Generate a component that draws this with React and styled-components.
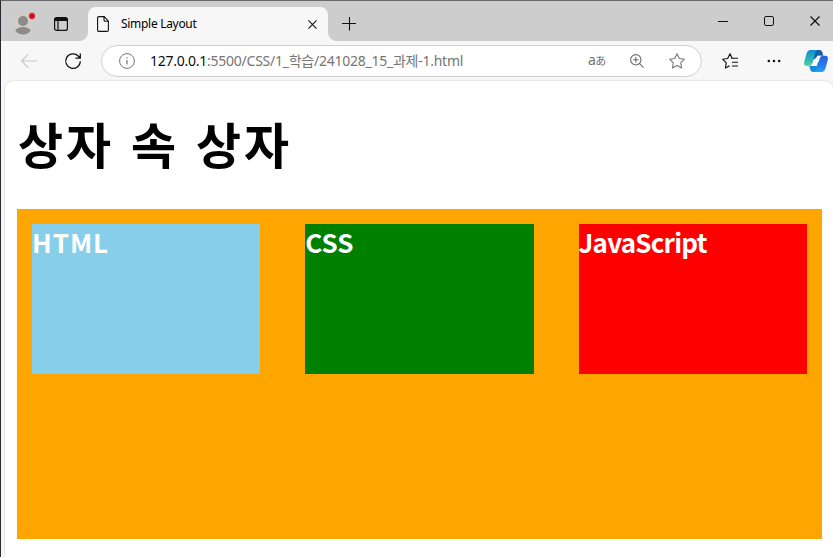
import React from "react";
import styled, { createGlobalStyle } from "styled-components";

const Global = createGlobalStyle`
  * { box-sizing: border-box; }
  html, body { margin: 0; background: #fff; overflow: hidden; }
  body { font-family: "Noto Sans", "Noto Sans CJK KR", sans-serif; color: #000; }
  h1, h2 { margin: 0; }
  svg { display: block; flex: none; overflow: visible; }
`;

const Window = styled.div`
  width: 833px;
  height: 557px;
  display: flex;
  flex-direction: column;
  background: #f7f7f7;
  border-top: 1px solid #69676b;
  border-left: 1px solid #2b2936;
  overflow: hidden;
`;

const TitleBar = styled.header`
  display: flex;
  height: 40px;
  flex: none;
  background: #cdcdcd;
`;

const Glyph = styled.span`
  display: flex;
  flex: none;
  width: ${(p) => p.$w}px;
  height: ${(p) => p.$h || p.$w}px;
  margin-left: ${(p) => p.$gap || 0}px;
  margin-top: ${(p) => p.$top || 0}px;
`;

const Tab = styled.div`
  position: relative;
  display: flex;
  width: 240px;
  height: 34px;
  margin: 6px 0 0 20px;
  background: #f7f7f7;
  border-radius: 8px 8px 0 0;

  &::before,
  &::after {
    content: "";
    position: absolute;
    bottom: 0;
    width: 8px;
    height: 8px;
  }
  &::before {
    left: -8px;
    background: radial-gradient(circle at 0 0, #cdcdcd 7.5px, #f7f7f7 8px);
  }
  &::after {
    right: -8px;
    background: radial-gradient(circle at 100% 0, #cdcdcd 7.5px, #f7f7f7 8px);
  }
`;

const TabTitle = styled.span`
  width: 186px;
  margin-left: 12px;
  font-size: 12px;
  line-height: 34px;
  letter-spacing: -0.3px;
  white-space: nowrap;
`;

const Toolbar = styled.nav`
  display: flex;
  height: 40px;
  flex: none;
`;

const AddressBar = styled.div`
  display: flex;
  width: 601px;
  height: 32px;
  margin: 4px 0 0 20px;
  background: #fff;
  border: 1px solid #cfcfcf;
  border-radius: 16px;
`;

const Url = styled.div`
  width: 438px;
  margin-left: 15px;
  font-size: 14px;
  line-height: 30px;
  color: #757575;
  white-space: nowrap;
  letter-spacing: -0.25px;
`;

const Host = styled.span`
  color: #111;
`;

const Translate = styled.span`
  width: 19px;
  font-size: 14px;
  line-height: 28px;
  color: #707070;
  white-space: nowrap;

  small { font-family: "Noto Sans CJK JP", sans-serif; font-size: 11px; margin-left: -0.5px; }
`;

const Page = styled.main`
  flex: 1;
  margin-left: 4px;
  padding: 30px 11px 0 12px;
  background: #fff;
  border-radius: 8px 8px 0 0;
  box-shadow: 0 0 2px rgba(0, 0, 0, 0.22);
`;

const Heading = styled.h1`
  height: 98px;
  font-family: "Noto Sans CJK KR", sans-serif;
  font-size: 49px;
  line-height: 64px;
  font-weight: 700;
  letter-spacing: 2.9px;
  word-spacing: 3px;
  padding-left: 1px;
  white-space: nowrap;
`;

const Outer = styled.section`
  display: flex;
  justify-content: space-between;
  height: 330px;
  padding: 15px;
  background: #ffa500;
`;

const Card = styled.article`
  width: 228.4px;
  height: 150px;
  background: ${(p) => p.$color};
`;

const CardTitle = styled.h2`
  font-family: "Noto Sans CJK KR", sans-serif;
  font-size: 26px;
  line-height: 36px;
  font-weight: 700;
  color: #fff;
  letter-spacing: ${(p) => p.$track}px;
`;

const cards = [
  { title: "HTML", color: "#87ceeb", track: 1 },
  { title: "CSS", color: "#008000", track: 0 },
  { title: "JavaScript", color: "#ff0000", track: -0.8 },
];

const STAR = "M8 .8 10.3 5.5 15.4 6.2 11.7 9.8 12.6 15 8 12.5 3.4 15 4.3 9.8 .6 6.2 5.7 5.5Z";

const Avatar = () => (
  <svg width="24" height="24" viewBox="0 0 24 24">
    <circle cx="11" cy="12" r="10.5" fill="#d1cec9" />
    <circle cx="11" cy="9" r="5" fill="#8d8b88" />
    <path d="M3.2 18.5Q5.5 15 11 15t7.8 3.5Q16 22.6 11 22.6t-7.8-4.1Z" fill="#8d8b88" />
    <circle cx="20" cy="4" r="3.4" fill="#d50b17" stroke="#dedede" strokeWidth=".6" />
  </svg>
);

const Workspaces = () => (
  <svg width="14" height="14" viewBox="0 0 14 14" fill="none" stroke="#111">
    <rect x=".6" y=".6" width="12.8" height="12.8" rx="2" strokeWidth="1.2" />
    <path d="M.8 2.5h12.4" strokeWidth="3" />
    <path d="M4 3v10" strokeWidth="1.2" />
  </svg>
);

const FileIcon = () => (
  <svg width="12" height="16" viewBox="0 0 12 16" fill="none" stroke="#111" strokeWidth="1.1">
    <path d="M2 .6h5.2l4.2 4.5V14q0 1.4-1.4 1.4H2Q.6 15.4.6 14V2Q.6.6 2 .6ZM7 .8V4q0 1.3 1.3 1.3h3" />
  </svg>
);

const Cross = ({ size }) => (
  <svg width={size} height={size} viewBox="0 0 10 10" stroke="#111" strokeWidth="1.2">
    <path d="m.5.5 9 9m0-9-9 9" />
  </svg>
);

const Plus = () => (
  <svg width="14" height="14" viewBox="0 0 14 14" stroke="#111" strokeWidth="1.1">
    <path d="M0 6.5h14M7.5 0v13.5" />
  </svg>
);

const Minimize = () => (
  <svg width="10" height="10" viewBox="0 0 10 10" stroke="#111">
    <path d="M0 4.5h10" />
  </svg>
);

const Maximize = () => (
  <svg width="10" height="10" viewBox="0 0 10 10" fill="none" stroke="#111">
    <rect x=".5" y=".5" width="9" height="9" rx="1.4" />
  </svg>
);

const Back = () => (
  <svg width="16" height="14" viewBox="0 0 16 14" fill="none" stroke="#c6c6c6" strokeWidth="1.1">
    <path d="M16 7H.8M7.2.4.6 7l6.6 6.6" />
  </svg>
);

const Refresh = () => (
  <svg width="16" height="16" viewBox="0 0 16 16" fill="none" stroke="#111" strokeWidth="1.25">
    <path d="M15.3 8.2A7.3 7.3 0 1 1 13.2 3L15 4.8M15.3.4v4.8h-4.8" />
  </svg>
);

const Info = () => (
  <svg width="16" height="16" viewBox="0 0 16 16" fill="none" stroke="#757575">
    <circle cx="8" cy="8" r="7.4" strokeWidth="1" />
    <path d="M8 7v4.5M8 4.2v1.4" strokeWidth="1.2" />
  </svg>
);

const Zoom = () => (
  <svg width="14" height="14" viewBox="0 0 14 14" fill="none" stroke="#6b6b6b" strokeWidth="1.1">
    <circle cx="5.8" cy="5.8" r="5.2" />
    <path d="m9.6 9.6 4 4M3.1 5.8h5.4M5.8 3.1v5.4" />
  </svg>
);

const Star = () => (
  <svg width="16" height="16" viewBox="0 0 16 16" fill="none" stroke="#757575" strokeWidth="1.05" strokeLinejoin="round">
    <path d={STAR} />
  </svg>
);

const Favorites = () => (
  <svg width="16" height="16" viewBox="0 0 16 16" fill="none" stroke="#111" strokeWidth="1.15" strokeLinejoin="round">
    <path d="M7.6 12.7 3.4 15 4.3 9.8.6 6.2 5.7 5.5 8 .8l2.1 4.4M9 5.2h7M10 9.2h6M10 13h6" />
  </svg>
);

const More = () => (
  <svg width="14" height="4" viewBox="0 0 14 4" fill="#111">
    <circle cx="1.8" cy="2" r="1.25" />
    <circle cx="7" cy="2" r="1.25" />
    <circle cx="12.2" cy="2" r="1.25" />
  </svg>
);

const Copilot = () => (
  <svg width="24" height="22" viewBox="0 0 24 22">
    <defs>
      <linearGradient id="left" x1="0" y1="0" x2="0" y2="1">
        <stop stopColor="#168acd" />
        <stop offset=".55" stopColor="#24b4b9" />
        <stop offset="1" stopColor="#62d394" />
      </linearGradient>
      <linearGradient id="right" x1="0" y1="0" x2="0" y2="1">
        <stop stopColor="#2b62d9" />
        <stop offset=".6" stopColor="#2979f0" />
        <stop offset="1" stopColor="#22a7ed" />
      </linearGradient>
    </defs>
    <path d="M7 0h8.5Q17.7 0 18.3 2.2l1 3.5H15q-2 0-2.7 2L9 10Z" fill="#145ea9" />
    <path d="M17 22H9.2Q7 22 6.4 20l-1.2-4H9q2 0 2.7-2l3.7-3Z" fill="#168bdc" />
    <path d="M6.5 0H14q-2 0-2.8 3L8.5 13q-.8 3-3.5 3H3q-3.7 0-2.8-4L2.4 4Q3.5 0 6.5 0Z" fill="url(#left)" />
    <path d="M17.5 22H10q2 0 2.8-3L15.5 9q.8-3.2 3.5-3.2h2q3.7 0 2.8 4L21.6 18q-1.1 4-4.1 4Z" fill="url(#right)" />
    <path d="M13.2 5.8h4L15.6 7l-2.8 9H8.3q1.5-.5 2-2.2Z" fill="#f7f9fb" />
  </svg>
);

export default function App() {
  return (
    <Window>
      <Global />
      <TitleBar>
        <Glyph $w={24} $gap={11} $top={11}><Avatar /></Glyph>
        <Glyph $w={14} $gap={18} $top={16}><Workspaces /></Glyph>
        <Tab>
          <Glyph $w={12} $h={16} $gap={9} $top={9}><FileIcon /></Glyph>
          <TabTitle>Simple Layout</TabTitle>
          <Glyph $w={9} $gap={1} $top={13}><Cross size={9} /></Glyph>
        </Tab>
        <Glyph $w={14} $gap={14} $top={16}><Plus /></Glyph>
        <Glyph $w={10} $gap={362} $top={16}><Minimize /></Glyph>
        <Glyph $w={10} $gap={36} $top={15}><Maximize /></Glyph>
        <Glyph $w={10} $gap={36} $top={15}><Cross size={10} /></Glyph>
      </TitleBar>
      <Toolbar>
        <Glyph $w={16} $h={14} $gap={20} $top={13}><Back /></Glyph>
        <Glyph $w={16} $gap={28} $top={12}><Refresh /></Glyph>
        <AddressBar>
          <Glyph $w={16} $gap={17} $top={7}><Info /></Glyph>
          <Url><Host>127.0.0.1</Host>:5500/CSS/1_학습/241028_15_과제-1.html</Url>
          <Translate>a<small>あ</small></Translate>
          <Glyph $w={14} $gap={23} $top={8}><Zoom /></Glyph>
          <Glyph $w={16} $gap={25} $top={7}><Star /></Glyph>
        </AddressBar>
        <Glyph $w={16} $gap={20} $top={12}><Favorites /></Glyph>
        <Glyph $w={14} $h={4} $gap={29} $top={18}><More /></Glyph>
        <Glyph $w={24} $h={22} $gap={23} $top={9}><Copilot /></Glyph>
      </Toolbar>
      <Page>
        <Heading>상자 속 상자</Heading>
        <Outer>
          {cards.map((card) => (
            <Card key={card.title} $color={card.color}>
              <CardTitle $track={card.track}>{card.title}</CardTitle>
            </Card>
          ))}
        </Outer>
      </Page>
    </Window>
  );
}
